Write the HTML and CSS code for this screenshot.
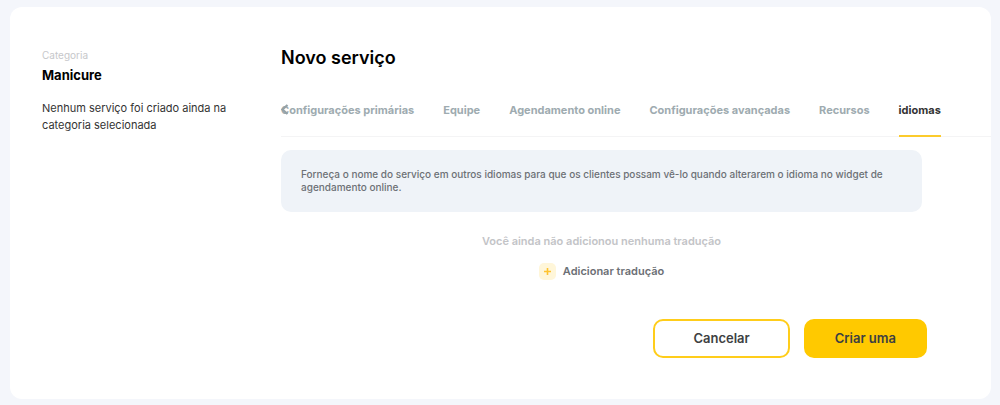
FILE: index.html
```html
<!DOCTYPE html>
<html lang="pt">
<head>
  <meta charset="UTF-8" />
  <meta name="viewport" content="width=device-width, initial-scale=1.0"/>
  <title>Novo serviço</title>
  <link rel="stylesheet" href="styles.css">
</head>
<body>
  <div class="card">
    <aside class="sidebar">
      <p class="category-label">Categoria</p>
      <h2 class="category-name">Manicure</h2>
      <p class="category-text">Nenhum serviço foi criado ainda na categoria selecionada</p>
    </aside>

    <main class="content">
      <h1 class="title">Novo serviço</h1>

      <nav class="tabs">
        <button type="button" class="tabs-prev" aria-label="Anterior">
          <svg width="8" height="12" viewBox="0 0 8 12" fill="none" stroke="#95a2a7" stroke-width="2.200">
            <path d="M6.500 1L1.500 5.500L6.500 10"/>
          </svg>
        </button>
        <a href="#" class="tab">Configurações primárias</a>
        <a href="#" class="tab">Equipe</a>
        <a href="#" class="tab">Agendamento online</a>
        <a href="#" class="tab">Configurações avançadas</a>
        <a href="#" class="tab">Recursos</a>
        <a href="#" class="tab active">idiomas</a>
      </nav>

      <div class="panel">
        <p class="info">Forneça o nome do serviço em outros idiomas para que os clientes possam vê-lo quando alterarem o idioma no widget de agendamento online.</p>
        <p class="empty">Você ainda não adicionou nenhuma tradução</p>
        <button type="button" class="add">
          <span class="add-icon">
            <svg width="7" height="7" viewBox="0 0 7 7" stroke="#ffc32e" stroke-width="1.600">
              <path d="M3.500 0v7M0 3.500h7"/>
            </svg>
          </span>
          Adicionar tradução
        </button>
      </div>

      <div class="actions">
        <button type="button" class="btn">Cancelar</button>
        <button type="button" class="btn btn-primary">Criar uma</button>
      </div>
    </main>
  </div>
</body>
</html>
```

FILE: styles.css
```css
* {
  box-sizing: border-box;
}
body {
  margin: 0;
  padding: 7px 9px 6px 10px;
  background: #f4f6fb;
  font-family: Inter, "Liberation Sans", sans-serif;
  font-size: 11px;
}
h1, h2, p {
  margin: 0;
}
button {
  font-family: inherit;
  border: none;
  background: none;
  padding: 0;
  cursor: pointer;
}
.card {
  display: flex;
  background: #ffffff;
  border-radius: 12px;
  padding: 40px 0 41px 32px;
}
.sidebar {
  flex: 0 0 239px;
  padding-right: 32px;
}
.category-label {
  font-size: 10px;
  line-height: 16px;
  color: #c6c7ca;
}
.category-name {
  margin-top: 3px;
  font-size: 13px;
  line-height: 18px;
  font-weight: 700;
  color: #000000;
}
.category-text {
  margin-top: 16px;
  line-height: 17px;
  color: #333333;
}
.content {
  flex: 1;
  min-width: 0;
}
.title {
  font-size: 18px;
  line-height: 22px;
  font-weight: 600;
  color: #000000;
}
.tabs {
  position: relative;
  display: flex;
  gap: 29px;
  margin-top: 28px;
  border-bottom: 1px solid #f4f4f5;
}
.tabs-prev {
  position: absolute;
  left: 0;
  top: 7px;
  display: flex;
}
.tab {
  padding: 5px 0 16px;
  margin-bottom: -1px;
  border-bottom: 2px solid transparent;
  line-height: 17px;
  font-weight: 700;
  color: #9eabb0;
  text-decoration: none;
  white-space: nowrap;
}
.tab.active {
  color: #333333;
  border-bottom-color: #fccb2c;
}
.panel {
  display: flex;
  flex-direction: column;
  align-items: center;
  margin: 13px 69px 0 0;
}
.info {
  width: 100%;
  padding: 18px 20px;
  border-radius: 10px;
  background: #eff3f8;
  font-size: 10px;
  line-height: 13px;
  font-weight: 500;
  color: #6c7075;
}
.empty {
  margin-top: 21px;
  line-height: 17px;
  font-weight: 600;
  color: #c3c4c7;
}
.add {
  display: flex;
  align-items: center;
  gap: 7px;
  margin-top: 13px;
  font-size: 11px;
  line-height: 17px;
  font-weight: 600;
  color: #6c7075;
}
.add-icon {
  display: flex;
  align-items: center;
  justify-content: center;
  width: 17px;
  height: 17px;
  border-radius: 5px;
  background: #fff6d9;
}
.actions {
  display: flex;
  justify-content: flex-end;
  gap: 14px;
  margin: 39px 64px 0 0;
}
.btn {
  padding: 9px 38px;
  border: 2px solid #ffcd1a;
  border-radius: 10px;
  font-size: 13px;
  line-height: 17px;
  font-weight: 600;
  color: #3d3f42;
}
.btn-primary {
  padding: 9px 29px;
  background: #ffc900;
  border-color: #ffc900;
}
```
